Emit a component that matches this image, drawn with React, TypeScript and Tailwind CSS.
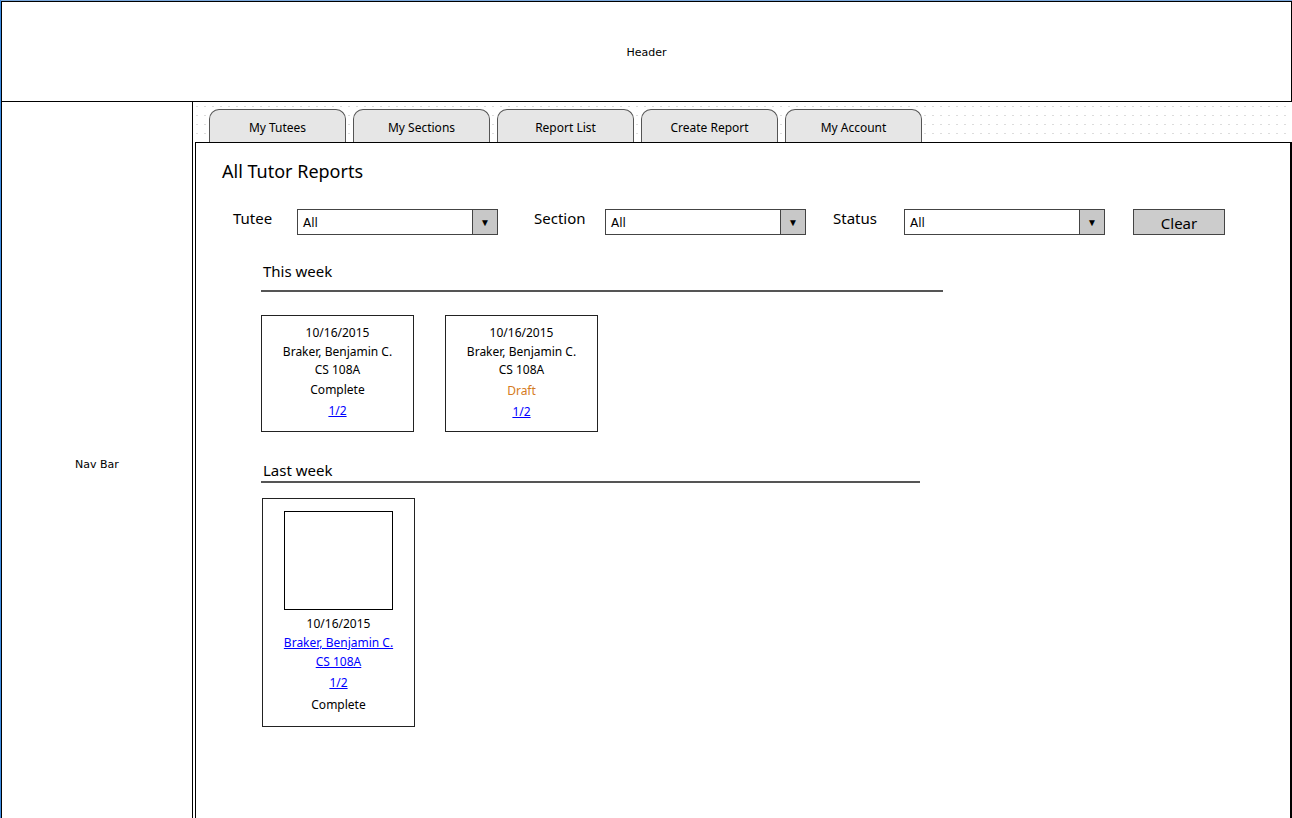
import React from 'react';

const sketch = { fontFamily: '"Comic Sans MS", "Noto Sans", sans-serif' };
const plain = { fontFamily: '"DejaVu Sans", Tahoma, sans-serif' };

const tabs = ['My Tutees', 'My Sections', 'Report List', 'Create Report', 'My Account'];

function Select() {
  return (
    <div className="flex h-[26px] w-[201px] border border-[#444] bg-white">
      <div className="flex-1 pl-[5px] pt-[6px] text-[12px] leading-[14px] text-black" style={plain}>All</div>
      <div className="flex w-[25px] items-center justify-center border-l border-[#444] bg-[#c8c8c8] text-[10px] text-black">▼</div>
    </div>
  );
}

function SectionHeading({ title, width }: { title: string; width: string }) {
  return (
    <div className={width}>
      <div className="pl-[2px] text-[15px] leading-[20px] text-black" style={sketch}>{title}</div>
    </div>
  );
}

function SmallCard({ status, draft }: { status: string; draft?: boolean }) {
  return (
    <div className="flex h-[117px] w-[153px] flex-col items-center border border-[#222] pt-[7px] text-[12px] leading-[19px] text-black" style={sketch}>
      <div>10/16/2015</div>
      <div>Braker, Benjamin C.</div>
      <div className="-mt-[1px]">CS 108A</div>
      <div className={draft ? 'mt-[2px] text-[#d57b22]' : 'mt-[1px]'}>{status}</div>
      <div className="mt-[2px] text-[#0000ff] underline">1/2</div>
    </div>
  );
}

export default function App() {
  return (
    <div className="flex h-[818px] w-[1292px] overflow-hidden bg-white">
      <div className="w-px shrink-0 bg-[#3d8be0]" />
      <div className="flex flex-1 flex-col">
        <div className="h-px shrink-0 bg-[#7aa8dc]" />
        <div className="flex h-[101px] items-center justify-center border border-black pt-[3px] text-[11px] text-black" style={plain}>
          Header
        </div>
        <div className="flex h-[716px]">
          <div className="flex w-[192px] shrink-0 items-center justify-center border-r border-l border-black pt-[10px] text-[11px] text-black" style={plain}>
            Nav Bar
          </div>
          <div className="flex flex-1 flex-col">
            <div className="flex h-[40px] gap-[7px] bg-[radial-gradient(#dcdcdc_0.7px,transparent_0.8px)] bg-[length:8px_9px] pl-[16px] pt-[7px]">
              {tabs.map((t) => (
                <div
                  key={t}
                  className="flex h-[34px] w-[137px] items-center justify-center rounded-t-[10px] border border-b-0 border-[#555] bg-[#e6e6e6] pt-[3px] text-[12px] text-black"
                  style={sketch}
                >
                  {t}
                </div>
              ))}
            </div>
            <div className="ml-[2px] flex-1 border-l border-r-2 border-t border-black pl-[26px] pt-[16px]">
              <div className="text-[18px] leading-[24px] text-black" style={sketch}>All Tutor Reports</div>

              <div className="mt-[26px] flex items-center text-[15px] text-black" style={sketch}>
                <div className="w-[75px] pl-[11px] -mt-[7px]">Tutee</div>
                <Select />
                <div className="ml-[36px] w-[71px] -mt-[7px]">Section</div>
                <Select />
                <div className="ml-[27px] w-[71px] -mt-[7px]">Status</div>
                <Select />
                <div className="ml-[28px] flex h-[26px] w-[92px] items-center justify-center border border-[#444] bg-[#cccccc] pt-[2px]">Clear</div>
              </div>

              <div className="ml-[39px] mt-[26px]">
                <SectionHeading title="This week" width="w-[682px]" />
                <div className="mt-[9px] h-[2px] w-[682px] bg-[#555]" />
                <div className="mt-[23px] flex gap-[31px]">
                  <SmallCard status="Complete" />
                  <SmallCard status="Draft" draft />
                </div>

                <div className="mt-[28px]">
                  <SectionHeading title="Last week" width="w-[659px]" />
                  <div className="mt-[1px] h-[2px] w-[659px] bg-[#555]" />
                </div>

                <div className="ml-[1px] mt-[15px] flex h-[229px] w-[153px] flex-col items-center border border-[#222] pt-[12px] text-[12px] leading-[19px] text-black" style={sketch}>
                  <div className="h-[99px] w-[109px] border border-black" />
                  <div className="mt-[4px]">10/16/2015</div>
                  <div className="text-[#0000ff] underline">Braker, Benjamin C.</div>
                  <div className="text-[#0000ff] underline">CS 108A</div>
                  <div className="mt-[2px] text-[#0000ff] underline">1/2</div>
                  <div className="mt-[3px]">Complete</div>
                </div>
              </div>
            </div>
          </div>
        </div>
      </div>
    </div>
  );
}
